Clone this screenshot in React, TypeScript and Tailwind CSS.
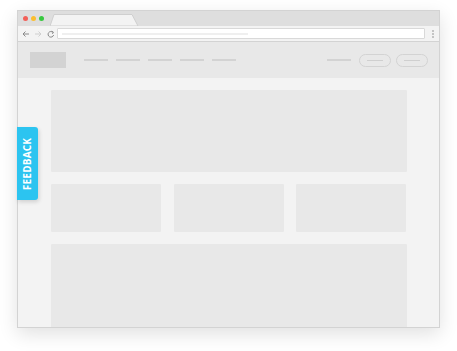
import React from "react";

export default function App() {
  const navX = [0, 1, 2, 3, 4];
  return (
    <div className="w-[457px] h-[351px] bg-white relative overflow-hidden" style={{ fontFamily: '"Open Sans", sans-serif' }}>
      <div className="absolute left-[17px] top-[10px] w-[423px] h-[318px] border border-[#d3d3d3] flex flex-col shadow-[0_6px_18px_rgba(0,0,0,0.12)] bg-[#f3f3f3]">
        {/* title bar */}
        <div className="relative h-[15px] bg-[#dedede] shrink-0">
          <div className="absolute left-[5px] top-[5px] flex gap-[3px]">
            <span className="w-[5px] h-[5px] rounded-full bg-[#f25f58]" />
            <span className="w-[5px] h-[5px] rounded-full bg-[#fbbe2e]" />
            <span className="w-[5px] h-[5px] rounded-full bg-[#38c840]" />
          </div>
          <svg className="absolute left-[32px] top-[3px]" width="89" height="12" viewBox="0 0 89 12">
            <path d="M0 12 L4 0.5 L82 0.5 L88 12 Z" fill="#f3f3f3" stroke="#cfcfcf" strokeWidth="1" />
          </svg>
        </div>
        {/* toolbar */}
        <div className="h-[16px] bg-[#f3f3f3] border-b border-[#d3d3d3] flex items-center shrink-0 relative">
          <svg className="absolute left-[4px] top-[4px]" width="36" height="8" viewBox="0 0 36 8">
            <path d="M7 4 H1 M3.5 1.5 L1 4 L3.5 6.5" fill="none" stroke="#8a8a8a" strokeWidth="1" />
            <path d="M13 4 H19 M16.5 1.5 L19 4 L16.5 6.5" fill="none" stroke="#cfcfcf" strokeWidth="1" />
            <path d="M31 2.5 A2.8 2.8 0 1 0 31.6 5" fill="none" stroke="#8a8a8a" strokeWidth="1" />
            <path d="M29.8 1 L31.6 2.4 L30.2 4" fill="none" stroke="#8a8a8a" strokeWidth="0.9" />
          </svg>
          <div className="absolute left-[39px] top-[2px] w-[368px] h-[11px] bg-white border border-[#d9d9d9] rounded-[1px]">
            <div className="absolute left-[4px] top-[4px] w-[186px] h-[2px] bg-[#efefef]" />
          </div>
          <div className="absolute left-[414px] top-[4px] flex flex-col gap-[1px]">
            <span className="w-[2px] h-[2px] bg-[#c4c4c4]" />
            <span className="w-[2px] h-[2px] bg-[#c4c4c4]" />
            <span className="w-[2px] h-[2px] bg-[#c4c4c4]" />
          </div>
        </div>
        {/* page header */}
        <div className="h-[36px] bg-[#e8e8e8] flex items-center pl-[12px] pr-[11px] shrink-0">
          <div className="w-[36px] h-[16px] bg-[#d3d3d3]" />
          <div className="flex gap-[8px] ml-[18px]">
            {navX.map((i) => (
              <span key={i} className="w-[24px] h-[2px] bg-[#d3d3d3]" />
            ))}
          </div>
          <div className="flex-1" />
          <span className="w-[24px] h-[2px] bg-[#d3d3d3]" />
          <div className="ml-[8px] w-[32px] h-[13px] rounded-full border border-[#d3d3d3] flex items-center justify-center">
            <span className="w-[16px] h-[1px] bg-[#cfcfcf]" />
          </div>
          <div className="ml-[5px] w-[32px] h-[13px] rounded-full border border-[#d3d3d3] flex items-center justify-center">
            <span className="w-[16px] h-[1px] bg-[#cfcfcf]" />
          </div>
        </div>
        {/* content */}
        <div className="flex-1 bg-[#f3f3f3] pl-[33px] pr-[32px] pt-[12px] flex flex-col gap-[12px] overflow-hidden">
          <div className="h-[82px] bg-[#e8e8e8] rounded-[1px] shrink-0" />
          <div className="flex gap-[12px] h-[48px] shrink-0">
            <div className="w-[110px] bg-[#e8e8e8] rounded-[1px]" />
            <div className="w-[110px] bg-[#e8e8e8] rounded-[1px] ml-[1px]" />
            <div className="w-[110px] bg-[#e8e8e8] rounded-[1px]" />
          </div>
          <div className="flex-1 bg-[#e8e8e8] rounded-t-[1px]" />
        </div>
        {/* feedback tab */}
        <div className="absolute left-[-1px] top-[116px] w-[21px] h-[73px] bg-[#2cc4f0] rounded-r-[3px] shadow-[1px_2px_4px_rgba(0,0,0,0.15)] flex items-center justify-center">
          <span className="block -rotate-90 whitespace-nowrap text-white font-bold text-[10px] leading-none tracking-[0.2px]">FEEDBACK</span>
        </div>
      </div>
    </div>
  );
}
